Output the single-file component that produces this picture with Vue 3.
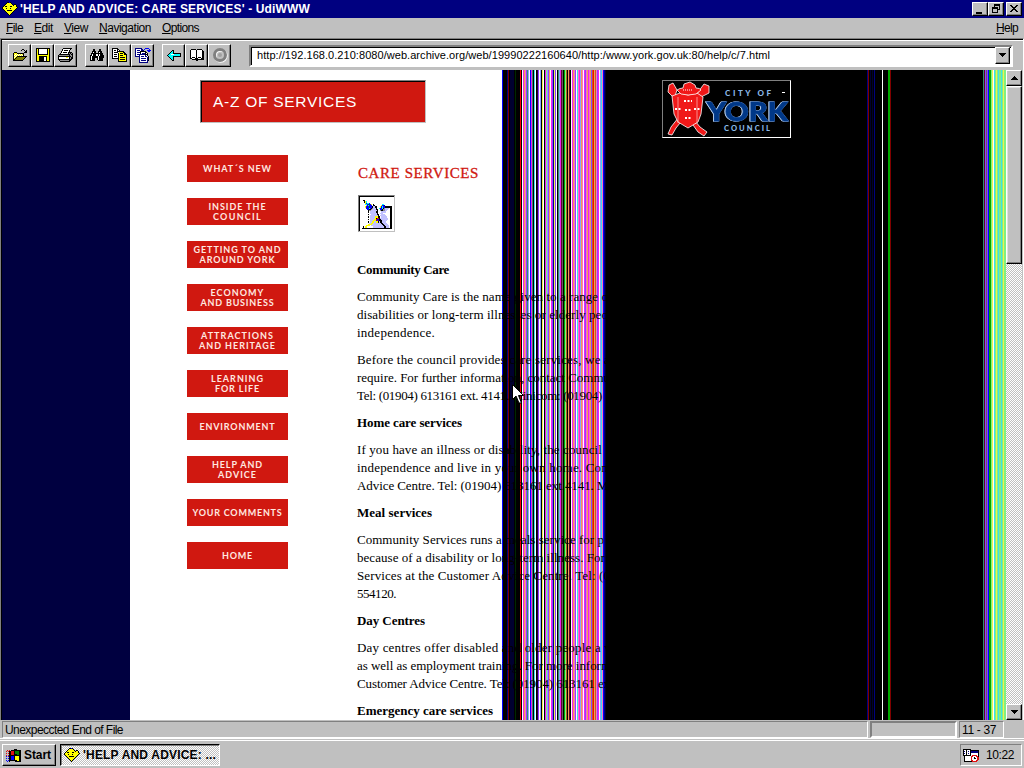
<script setup>
const fit = (el, { value }) => {
  el.style.letterSpacing = '0px'
  const n = el.textContent.length
  const w = el.getBoundingClientRect().width
  el.style.letterSpacing = (value - w) / n + 'px'
}
const vFit = { mounted: fit }

const menus = [['F', 'ile', 17], ['E', 'dit', 19], ['V', 'iew', 24], ['N', 'avigation', 52], ['O', 'ptions', 37]]

const nav = [
  [['WHAT´S NEW', 69]],
  [['INSIDE THE', 58], ['COUNCIL', 49]],
  [['GETTING TO AND', 88], ['AROUND YORK', 76]],
  [['ECONOMY', 54], ['AND BUSINESS', 74]],
  [['ATTRACTIONS', 73], ['AND HERITAGE', 77]],
  [['LEARNING', 53], ['FOR LIFE', 45]],
  [['ENVIRONMENT', 76]],
  [['HELP AND', 51], ['ADVICE', 39]],
  [['YOUR COMMENTS', 90]],
  [['HOME', 31]],
]

const sections = [
  { title: 'Community Care', w: 92, paras: [
    [['Community Care is the name given to a range o', 251], ['disabilities or long-term illnesses or elderly peo', 251], ['independence.', 78]],
    [['Before the council provides care services, we a', 253], ['require. For further information, contact Commu', 253], ['Tel: (01904) 613161 ext. 4141. Minicom: (01904)', 245]]] },
  { title: 'Home care services', w: 105, paras: [
    [['If you have an illness or disability, the council', 245], ['independence and live in your own home. Con', 251], ['Advice Centre. Tel: (01904) 613161 ext.4141. Mi', 255]]] },
  { title: 'Meal services', w: 75, paras: [
    [['Community Services runs a meals service for p', 247], ['because of a disability or long-term illness. For', 248], ['Services at the Customer Advice Centre. Tel: (0', 253], ['554120.', 39]]] },
  { title: 'Day Centres', w: 68, paras: [
    [['Day centres offer disabled and older people a v', 254], ['as well as employment training. For more inform', 254], ['Customer Advice Centre. Tel: (01904) 613161 ex', 253]]] },
  { title: 'Emergency care services', w: 136, paras: [] },
]

const palette = {
  k: '#000', b: '#00f', n: '#000030', N: '#000080', r: '#f00', R: '#800000', g: '#002800', G: '#0a0', w: '#fff',
  c: '#40e0e8', m: '#f020f0', p: '#ff70c0', o: '#f0a050', y: '#f0f050', l: '#80f080', v: '#9040ff', a: '#606060', L: '#90a0ff', t: '#309070', d: '#600030', B: '#c06020', D: '#280030',
}
const build = (start, s) => [...s].map((ch, i) => ({ x: start + i, fill: palette[ch] }))
const stripes = [
  ...build(502, 'bkkkkNRknnnnkgkkkkrkwmopvtLwbmtkcwkDvwLkywkmlLvowmvNyvwktLmdakGlBkodkwmopvwcpmLopwmvpompovBroBpvmwLcpvmwpoLmvwcmprwmbLnyvbkbnk'.slice(0, 101)),
  ...build(603, 'bNn'),
  ...build(867, 'NRknknkN'), ...build(882, 'w'), ...build(888, 'GGR'),
  ...build(983, 'tdvavbGGlywclylcllclyll'),
]

const art = {
  face: [
    '.....KKBK.......', '....KYYYYK......', '...KYYYYYYK.KK..', '..KYYYYYYYYKYYK.', '.KYKKYYYKKYYYYK.', 'KYYYYYYYYYYYYYYK', 'KYYYKYYYKYYYYYK.', '.KYYYYYYYYYYYK..', '..KYYKKKKKYYK...', '...KYYYYYYYK....', '....KYYYYYK.....', '.....KYYYK......', '......KYK.......', '.......K........'],
  open: [
    '..........KK....', '.........K..K.K.', '.............KK.', '..KKK.......KKK.', '.KYYYKKKKKKK....', '.KYWYWYWYWYK....', '.KWYWYWYWYWK....', '.KYWYKKKKKKKKKK.', '.KWYKOOOOOOOOK..', '.KYKOOOOOOOOK...', '.KKOOOOOOOOK....', '.KKKKKKKKKK.....'],
  save: [
    'KKKKKKKKKKKKKK', 'KYKWWWWWWWWKYK', 'KYKWWWWWWWWKYK', 'KYKWWWWWWWWKYK', 'KYKWWWWWWWWKYK', 'KYKWWWWWWWWKYK', 'KYKKKKKKKKKKYK', 'KYYYYYYYYYYYYK', 'KYYKKKKKKKKYYK', 'KYYKKKKKWWKYYK', 'KYYKKKKKWWKYYK', 'KYYKKKKKWWKYYK', 'KYYKKKKKWWKYYK', 'KKKKKKKKKKKKKK'],
  print: [
    '.....KKKKKKKKK..', '....KWWWWWWWK...', '....KWKKKKWK....', '...KWWWWWWWK....', '...KWKKKKWKKKK..', '..KWWWWWWWKSKSK.', '.KKKKKKKKKKKSKK.', 'KSSSSSSSSSSKSSK.', 'KKKKKKKKKKKKKSK.', 'KWWWWWWWYYWKSKK.', 'KWWWWWWWWWWKSKK.', 'KKKKKKKKKKKKKK..', '.KSSSSSSSSSKK...', '..KKKKKKKKKK....'],
  find: [
    '...KK....KK...', '...KK....KK...', '..KKKK..KKKK..', '..KWKK..KWKK..', '.KKKKKKKKKKKK.', '.KWKKKWWKWKKK.', 'KKWKKKWWKWKKKK', 'KWKKKKKKWKKKKK', 'KWKKKKKKWKKKKK', 'KWKKK..KWKKKK.', 'KWKKK..KWKKKK.', 'KKKKK...KKKKK.'],
  copy: [
    'KKKKKK..........', 'KWWWWKK.........', 'KWKKWKWK........', 'KWWWWKKKKKKK....', 'KWKKKKWYYYYKK...', 'KWWWWWKYKKKYKK..', 'KWKKKWKYYYYYKKK.', 'KWWWWWKYKKKYYYK.', 'KWKKKWKYYYYYYYK.', 'KWWWWWKYKKKKKYK.', 'KKKKKKKYYYYYYYK.', '......KYKKKKKYK.', '......KYYYYYYYK.', '......KKKKKKKKK.'],
  paste: [
    'NNNNNNN...BBBB..', 'NWWWWWNN.B....B.', 'NWNNNWNNN...BBBB', 'NWWWWKKKKKK..BB.', 'NWNNNKWWWWKK....', 'NWWWWKWNNNKWK...', 'NWNNNNNNNNKKK...', 'NWWWNWWWWWNWK...', 'NNNNNWNNNWNNWK..', '....NWWWWWWWNK..', '....NWNNNNNWNK..', '....NWWWWWWWNK..', '....NWNNNNNWNK..', '....NWWWWWWWN...', '....NNNNNNNNN...'],
  back: [
    '.....KK.......', '....KCK.......', '...KCCK.......', '..KCCCKKKKKKKK', '.KCCWWWCCCCCCK', 'KCCCCCCCCCCCCK', '.KCCCCKKKKKKKK', '..KCCCK.......', '...KCCK.......', '....KCK.......', '.....KK.......'],
  book: [
    '.KKKKK.KKKKK..', 'KWWWWWKWWWWWK.', 'KWWWWWKWWWWWKK', 'KWWWWWKWWWWWKK', 'KWWWWWKWWWWWKK', 'KWWWWWKWWWWWKK', 'KWWWWWKWWWWWKK', 'KWWWWWKWWWWWKK', 'KWKKKWKWKKKWKK', 'KKWWWKKKWWWKKK', '..KKKKKKKKKKKK', '......KK......'],
  flag: [
    '........KKK....', '.R.R.KKKKKKKKKK', 'R.RKKRRRKGGGGKK', '...KKRRRKGGGGKK', 'R.RKKRRRKGGGGKK', '...KKRRRKKKGGKK', 'R.RKKKKKKKKKKKK', 'B.BKKBBBKYYYYKK', '...KKBBBKYYYYKK', 'B.BKKBBBKYYYYKK', '...KKBBBKYYYYKK', 'B.BKKKKKKKKYYKK', '.B.K.....KKKKKK'],
  tray: [
    'KKKKKKKK........', 'KWWKWWWKKKKKKKKK', 'KNWKWNWKNNNNNNNK', 'KWWKWWWKNNNNNNNK', 'KNWKWNWKWWWWWWWK', 'KWWKWWWKWWWWWWWK', 'KKKKKKKKWRRRRRWK', '.KWWWWWWRRWWWRRK', '.KWWWWWWRWWKWWRR', '.KWWWWWWRWWKKWRR', '.KWWWWWWRWWWWWRR', '.KWWWWWWRRWWWRR.', '.KKKKKKKKRRRRR..'],
  pic: [
    '.KK...........................', '..KYC.........................', '...YBCCB......................', '...CCBGBBY.K........CC........', '....YBCBBB.KK......YBBN.......', '...YBBBGBBKLLKK...YBCBBKKKKKKK', '....BBBCBKSLLLK..CBBCKSLLLLWKK', '.....BBKKSLLLLKK..BBKSSLLL.WKK', '......KSSLLLLLLK..SKKSSLL..WKK', '......K.LLLLLLKK...LLLLL...WKK', '........LLLLLLLK..LLL......WKK', '......K..LLLLLLKK..LLLL....WKK', '........LLLLLLLLK.LLLLLL...WKK', '......K.LLLLLYYYKK.LLLLLL..WKK', '........LLLLLYKRRKLLLLLLLL.WKK', '......K.LLLLYYRBBKKLLLLLLL.WKK', '........LLLYYYBRBKKKLLLLL..WKK', '......K.LLYYLLYYKLKKLLLL...WKK', '.......LLYYLLLLLLLLKKLLLL..WKK', '......YYYYLLLLLLLLLLKKLLLL.WKK', '....YYYY.LLLLLLLLLLLLKKLLLLWKK', '.K.YY......LLLLLLLLLLLKKLLLWKK', 'KKKKKKKKKKKKKKKKKKKKKKKKKKKKKK'],
}
const inks = { K: '#000', W: '#fff', Y: '#ff0', B: '#00f', N: '#000080', G: '#008000', C: '#00ffff', R: '#e01010', O: '#808000', L: '#c0c0ff', S: '#909090' }
const px = (name) => {
  const out = []
  art[name].forEach((row, y) => [...row].forEach((c, x) => inks[c] && out.push({ x, y, f: inks[c] })))
  return out
}
const box = (name) => ({ w: Math.max(...art[name].map((r) => r.length)), h: art[name].length })
const icons = Object.fromEntries(Object.keys(art).map((k) => [k, { px: px(k), ...box(k) }]))
const groups = [['open', 'save', 'print'], ['find', 'copy', 'paste'], ['back', 'book', 'stop']]
</script>

<template>
  <div class="screen">
    <header class="title">
      <svg class="px" :width="icons.face.w" :height="icons.face.h"><rect v-for="(p, i) in icons.face.px" :key="i" :x="p.x" :y="p.y" width="1" height="1" :fill="p.f" /></svg>
      <b><span v-fit="290">'HELP AND ADVICE: CARE SERVICES' - UdiWWW</span></b>
      <div class="winbtns">
        <i class="btn"><svg class="px" width="12" height="10"><rect x="2" y="8" width="6" height="2" /></svg></i>
        <i class="btn"><svg class="px" width="12" height="10"><path d="M4 0h6v6h-2v-1h1v-3h-4v1h-1zM2 3h6v6h-6zM3 5v3h4v-3z" fill-rule="evenodd" /></svg></i>
        <i class="btn close"><svg class="px" width="12" height="10"><path d="M2 1h2v1h1v1h2v-1h1v-1h2v1h-1v1h-1v1h-1v1h1v1h1v1h1v1h-2v-1h-1v-1h-2v1h-1v1h-2v-1h1v-1h1v-1h1v-1h-1v-1h-1v-1h-1z" /></svg></i>
      </div>
    </header>
    <nav class="menu">
      <span v-for="m in menus" :key="m[1]" v-fit="m[2]"><u>{{ m[0] }}</u>{{ m[1] }}</span>
      <span v-fit="22" class="help"><u>H</u>elp</span>
    </nav>
    <div class="frame">
      <div class="toolbar">
        <div v-for="(g, gi) in groups" :key="gi" class="group">
          <i v-for="n in g" :key="n" class="tool">
            <svg v-if="n === 'stop'" width="18" height="16"><circle cx="9.700" cy="8.700" r="5.500" fill="none" stroke="#fff" stroke-width="3" /><circle cx="9" cy="8" r="5.500" fill="none" stroke="#808080" stroke-width="3" /><circle cx="9" cy="8" r="2" fill="#a0a0a0" /></svg>
            <svg v-else class="px" :width="icons[n].w" :height="icons[n].h"><rect v-for="(p, i) in icons[n].px" :key="i" :x="p.x" :y="p.y" width="1" height="1" :fill="p.f" /></svg>
          </i>
        </div>
        <div class="url"><span v-fit="513">http://192.168.0.210:8080/web.archive.org/web/19990222160640/http:/www.york.gov.uk:80/help/c/7.html</span>
          <i class="drop"><svg class="px" width="7" height="4"><path d="M0 0h7v1h-1v1h-1v1h-1v1h-1v-1h-1v-1h-1v-1h-1z" /></svg></i>
        </div>
      </div>
      <div class="view">
        <main class="page">
          <svg class="backdrop px" width="1004" height="650" viewBox="2 70 1004 650">
            <rect x="2" y="70" width="128" height="650" fill="#000040" />
            <rect x="130" y="70" width="372" height="650" fill="#fff" />
            <rect x="502" y="70" width="504" height="650" fill="#000" />
            <rect v-for="(s, i) in stripes" :key="i" :x="s.x" y="70" width="1" height="650" :fill="s.fill" />
          </svg>
          <div class="top">
            <div class="az"><span v-fit="144">A-Z OF SERVICES</span></div>
            <div class="logo">
              <svg width="127" height="56" viewBox="0 0 127 56">
                <g fill="#f01818" stroke="#fff" stroke-width=".8" stroke-linejoin="round">
                  <path d="M6 4l4-2 4 7-2 6 25 31 7 5-3 4-6-4-25-35-5-5z" /><path d="M38 7l3-4 5 2v7l-8 4-25 31-4 7-4-1 3-7 26-33z" />
                  <path d="M9 15l8-3 8 2 9-2 6 4-2 17-3 8-10 6-10-6-4-8z" />
                  <path d="M14 9q3-2 6-2l1-4 6-2 5 3 1 3q4 0 5 2l-5 4q-8 2-15 0z" />
                </g>
                <path d="M15 16v26M34 16v26" stroke="#ffc0c0" stroke-width=".7" />
                <g stroke="#fff" stroke-width="2" stroke-dasharray="2 1.500"><path d="M21 20h8M12 28h6M22 29h7M31 28h6M22 37h7" /></g>
                <path d="M20 9h10" stroke="#fff" stroke-width="1" stroke-dasharray="1 1" />
                <g class="york">
                  <text x="62" y="14.500" font-size="8" fill="#8cb8e8" textLength="46">CITY OF</text>
                  <rect x="119" y="11" width="3" height="1" fill="#fff" />
                  <text x="44" y="39.500" font-size="26" fill="#003888" stroke="#003888" stroke-width=".8" textLength="81" lengthAdjust="spacingAndGlyphs" class="name">YORK</text>
                  <text x="61" y="49.500" font-size="7.500" fill="#8cb8e8" textLength="46">COUNCIL</text>
                </g>
              </svg>
            </div>
          </div>
          <div class="cols">
            <div class="nav">
              <a v-for="(n, i) in nav" :key="i"><div v-for="l in n" :key="l[0]"><span v-fit="l[1]">{{ l[0] }}</span></div></a>
            </div>
            <article>
              <h1><span v-fit="121">CARE SERVICES</span></h1>
              <div class="pic"><svg class="px" width="30" height="31"><g transform="translate(0 2)"><rect v-for="(p, i) in icons.pic.px" :key="i" :x="p.x" :y="p.y * 1.25" width="1" height="1.300" :fill="p.f" /></g></svg></div>
              <section v-for="s in sections" :key="s.title">
                <h2><span v-fit="s.w">{{ s.title }}</span></h2>
                <p v-for="(para, i) in s.paras" :key="i"><span v-for="l in para" :key="l[0]" class="line"><span v-fit="l[1]">{{ l[0] }}</span></span></p>
              </section>
            </article>
          </div>
          <svg class="cursor" width="13" height="21"><path d="M.5 .5v15l3.500-3.500 3 7h2.500l-3-7.500h5z" fill="#fff" stroke="#000" /></svg>
        </main>
        <div class="scroll">
          <i class="arrow"><svg class="px" width="7" height="4"><path d="M3 0h1v1h1v1h1v1h1v1h-7v-1h1v-1h1v-1h1z" /></svg></i>
          <i class="thumb"></i>
          <i class="arrow last"><svg class="px" width="7" height="4"><path d="M0 0h7v1h-1v1h-1v1h-1v1h-1v-1h-1v-1h-1v-1h-1z" /></svg></i>
        </div>
      </div>
    </div>
    <div class="status">
      <div class="msg"><span v-fit="118">Unexpeccted End of File</span></div>
      <div class="meter"></div>
      <div class="pos"><span v-fit="34">11 - 37</span></div>
    </div>
    <footer class="taskbar">
      <div class="start"><svg class="px" width="16" height="13"><rect v-for="(p, i) in icons.flag.px" :key="i" :x="p.x" :y="p.y" width="1" height="1" :fill="p.f" /></svg><span v-fit="27">Start</span></div>
      <div class="task"><svg class="px" width="16" height="14"><rect v-for="(p, i) in icons.face.px" :key="i" :x="p.x" :y="p.y" width="1" height="1" :fill="p.f" /></svg><span v-fit="133">'HELP AND ADVICE: ...</span></div>
      <div class="tray"><svg class="px" width="16" height="13"><rect v-for="(p, i) in icons.tray.px" :key="i" :x="p.x" :y="p.y" width="1" height="1" :fill="p.f" /></svg><span v-fit="28">10:22</span></div>
    </footer>
  </div>
</template>

<style>
body { margin: 0; overflow: hidden; }
</style>

<style scoped>
* { box-sizing: border-box; }
.screen { width: 1024px; height: 768px; display: flex; flex-direction: column; background: #c0c0c0; font: 12px/14px "Liberation Sans", Arial, sans-serif; color: #000; white-space: pre; overflow: hidden; }
svg { display: block; flex: none; }
.px { shape-rendering: crispEdges; }
i { display: block; font-style: normal; flex: none; }
.title { height: 18px; flex: none; background: #000080; color: #fff; display: flex; align-items: center; padding: 0 2px; gap: 2px; }
.title b { display: block; }
.winbtns { margin-left: auto; display: flex; }
.btn, .tool, .drop, .arrow, .thumb, .start { background: #c0c0c0; border: 1px solid; border-color: #fff #000 #000 #fff; box-shadow: inset -1px -1px #808080; }
.btn { width: 16px; height: 14px; display: flex; padding: 1px; }
.close { margin-left: 2px; }
.menu { height: 20px; flex: none; display: flex; align-items: center; padding: 0 6px; gap: 11px; }
.menu u { text-underline-offset: 1px; }
.help { margin-left: auto; }
.frame { height: 682px; flex: none; border-left: 1px solid #808080; border-top: 1px solid #808080; border-right: 1px solid #fff; display: flex; flex-direction: column; box-shadow: inset 1px 1px #000; }
.toolbar { height: 30px; flex: none; display: flex; align-items: center; margin: 1px 0 0 1px; padding: 0 10px 0 6px; border-top: 1px solid #fff; gap: 8px; }
.group { display: flex; }
.tool { width: 23px; height: 23px; display: flex; align-items: center; justify-content: center; padding-bottom: 1px; }
.url { margin-left: 10px; flex: 1; height: 22px; background: #fff; border: 2px solid; border-color: #808080 #fff #fff #808080; box-shadow: inset 1px 1px #000; display: flex; align-items: center; padding: 0 1px 1px 6px; font-size: 11px; }
.drop { margin-left: auto; width: 15px; height: 17px; display: flex; align-items: center; justify-content: center; }
.view { display: flex; height: 650px; margin-left: 1px; }
.page { position: relative; width: 1004px; height: 650px; overflow: hidden; }
.backdrop { position: absolute; left: 0; top: 0; }
.top { position: relative; display: flex; height: 85px; padding: 10px 0 0 198px; }
.az { width: 226px; height: 43px; background: #d01810; border: 1px solid; border-color: #808080 #c0c0c0 #c0c0c0 #808080; box-shadow: inset 1px 1px #000; color: #fff; font-size: 15.5px; line-height: 42px; padding-left: 12px; }
.logo { margin-left: 236px; width: 129px; height: 58px; border: 1px solid; border-color: #808080 #fff #fff #808080; background: #000; }
.york { font-family: Lato, sans-serif; font-weight: 900; }
.name { filter: drop-shadow(.5px 0 0 #b0c8e8) drop-shadow(-.5px 0 0 #b0c8e8); }
.cols { position: relative; display: flex; padding-left: 185px; }
.nav { width: 101px; margin-right: 69px; display: flex; flex-direction: column; gap: 16px; }
.nav a { height: 27px; background: #d01810; color: #ffe8e0; display: flex; flex-direction: column; align-items: center; justify-content: center; font: bold 9px/10px Lato, sans-serif; padding-top: 1px; }
article { font: 13px/18px "Liberation Serif", "Times New Roman", serif; }
h1 { margin: 9px 0 13px 1px; font: 15px/18px "Liberation Serif", serif; color: #d01810; -webkit-text-stroke: .3px #d01810; }
h2 { margin: 0 0 9px; font: bold 13px/18px "Liberation Serif", serif; }
.pic { margin: 0 0 29px 1px; width: 37px; height: 37px; background: #fff; border: 1px solid; border-color: #808080 #c0c0c0 #c0c0c0 #808080; box-shadow: inset 1px 1px #000; padding: 2px 3px; }
p { margin: 0 0 9px; }
.line { display: block; height: 18px; }
.cursor { position: absolute; left: 510px; top: 314px; }
.scroll { width: 16px; height: 650px; display: flex; flex-direction: column; background: repeating-conic-gradient(#c0c0c0 0 25%, #fff 0 50%) 0 0 / 2px 2px; }
.arrow { width: 16px; height: 16px; display: flex; align-items: center; justify-content: center; }
.thumb { height: 178px; box-shadow: inset -1px -1px #808080, inset 1px 1px #dfdfdf; }
.last { margin-top: auto; }
.status { height: 19px; flex: none; display: flex; gap: 2px; padding: 1px 20px 0 2px; border-bottom: 1px solid #fff; }
.status div { height: 17px; border: 1px solid; border-color: #808080 #fff #fff #808080; padding: 0 2px; line-height: 16px; }
.status .msg { width: 867px; }
.status .meter { width: 87px; border-width: 2px; }
.status .pos { width: 45px; padding-left: 2px; }
.taskbar { height: 28px; flex: none; margin-top: auto; border-top: 1px solid #fff; display: flex; padding: 3px 2px 2px; gap: 4px; font-weight: bold; }
.start { width: 54px; height: 22px; display: flex; align-items: center; gap: 2px; padding-left: 3px; }
.task { width: 160px; height: 22px; border: 1px solid; border-color: #000 #fff #fff #000; box-shadow: inset 1px 1px #808080; background: repeating-conic-gradient(#c0c0c0 0 25%, #fff 0 50%) 0 0 / 2px 2px; display: flex; align-items: center; gap: 3px; padding-left: 3px; }
.tray { margin-left: auto; width: 62px; height: 22px; border: 1px solid; border-color: #808080 #fff #fff #808080; display: flex; align-items: center; gap: 7px; padding-left: 2px; font-weight: normal; }
</style>
